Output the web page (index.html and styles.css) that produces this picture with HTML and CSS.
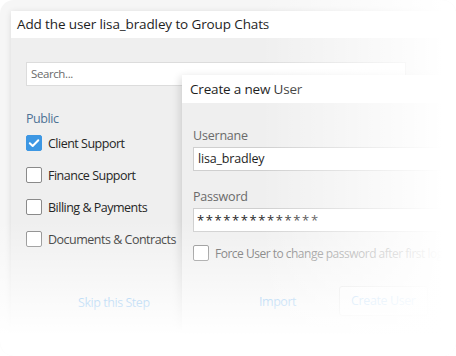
FILE: index.html
```html
<!DOCTYPE html>
<html>
<head>
<meta charset="utf-8">
<link rel="stylesheet" href="styles.css">
</head>
<body>
<div class="frame">
  <div class="dialog back">
    <div class="dlg-head">Add the user lisa_bradley to Group Chats</div>
    <div class="dlg-body back-body">
      <div class="search">Search...</div>
      <div class="group-label">Public</div>
      <div class="check-row"><span class="box checked"><svg viewBox="0 0 16 16" width="16" height="16"><path d="M3.8 8.2 L6.7 11 L12.3 5.2" fill="none" stroke="#fff" stroke-width="2" stroke-linecap="round" stroke-linejoin="round"/></svg></span><span class="check-text">Client Support</span></div>
      <div class="check-row"><span class="box"></span><span class="check-text">Finance Support</span></div>
      <div class="check-row"><span class="box"></span><span class="check-text">Billing &amp; Payments</span></div>
      <div class="check-row"><span class="box"></span><span class="check-text">Documents &amp; Contracts</span></div>
      <div class="back-actions"><span class="link">Skip this Step</span></div>
    </div>
  </div>

  <div class="dialog front">
    <div class="dlg-head front-head">Create a new User</div>
    <div class="dlg-body front-body">
      <div class="field-label">Usernane</div>
      <div class="input">lisa_bradley</div>
      <div class="field-label second">Password</div>
      <div class="input pwd">**************</div>
      <div class="check-row small"><span class="box"></span><span class="check-text muted">Force User to change password after first login</span></div>
      <div class="front-actions"><span class="link import">Import</span><span class="btn">Create User</span></div>
    </div>
  </div>

  <div class="fade"></div>
</div>
</body>
</html>
```

FILE: styles.css
```css
* { box-sizing: border-box; }
html, body { margin: 0; padding: 0; background: #fff; }
body { width: 456px; height: 356px; overflow: hidden; font-family: "Open Sans", "Noto Sans", sans-serif; }

.frame {
  position: relative;
  width: 456px;
  height: 356px;
  background: #f6f6f6;
  border-radius: 14px;
  overflow: hidden;
  padding: 11px 0 0 11px;
}

.dialog { box-shadow: 0 1px 6px rgba(0,0,0,0.12); }

.back { width: 445px; height: 334px; display: flex; flex-direction: column; }

.dlg-head {
  height: 27px;
  background: #fff;
  color: #1e1e1e;
  font-size: 13.5px;
  letter-spacing: -0.12px;
  line-height: 27px;
  padding-left: 6px;
  flex: none;
  white-space: nowrap;
}

.dlg-body { background: #efefef; flex: 1; display: flex; flex-direction: column; }

.back-body { padding: 24px 0 0 15px; }

.search {
  width: 380px;
  height: 24px;
  background: #fff;
  border: 1px solid #dcdcdc;
  color: #6a6a6a;
  font-size: 11.5px;
  letter-spacing: -0.4px;
  line-height: 22px;
  padding-left: 4px;
}

.group-label {
  margin-top: 25px;
  color: #4d7295;
  font-size: 12.5px;
  letter-spacing: -0.45px;
  line-height: 16px;
}

.check-row { height: 32px; display: flex; align-items: center; gap: 6px; white-space: nowrap; }

.box {
  width: 16px;
  height: 16px;
  flex: none;
  background: #fff;
  border: 1px solid #8a8a8a;
  border-radius: 2px;
  display: flex;
}
.box.checked { background: #3d97e3; border-color: #3d97e3; }
.box.checked svg { margin: -1px; }

.check-text { color: #262626; font-size: 12.5px; letter-spacing: -0.5px; }
.check-text.muted { color: #5a5a5a; font-size: 12px; letter-spacing: -0.5px; }

.back-actions { margin-top: 35px; padding-left: 52px; }
.link { color: #3d97e3; font-size: 12.5px; letter-spacing: -0.45px; }

.front {
  position: absolute;
  left: 182px;
  top: 75px;
  width: 274px;
  height: 256px;
  display: flex;
  flex-direction: column;
  box-shadow: -2px 2px 8px rgba(0,0,0,0.14);
}
.front-head { height: 28px; line-height: 28px; padding-left: 8px; letter-spacing: -0.18px; }
.front-body { padding: 24px 0 0 11px; }

.field-label { color: #6a6a6a; font-size: 12.5px; letter-spacing: -0.2px; line-height: 18px; }
.field-label.second { margin-top: 17px; }

.input {
  margin-top: 2px;
  width: 263px;
  height: 24px;
  background: #fff;
  border: 1px solid #cfcfcf;
  color: #1e1e1e;
  font-size: 12.5px;
  letter-spacing: -0.18px;
  line-height: 22px;
  padding-left: 4px;
}
.input.pwd { letter-spacing: 1.6px; font-size: 13px; padding-left: 3px; }

.check-row.small { margin-top: 5px; }

.front-actions { margin-top: 17px; display: flex; align-items: center; padding-left: 66px; gap: 43px; }
.btn {
  height: 30px;
  line-height: 28px;
  padding: 0 11px;
  border: 1px solid #c8c8c8;
  border-radius: 3px;
  background: #f7f7f7;
  color: #3d97e3;
  font-size: 12.5px;
  letter-spacing: -0.4px;
  white-space: nowrap;
}

.fade {
  position: absolute;
  inset: 0;
  pointer-events: none;
  background:
    linear-gradient(to right, rgba(255,255,255,0) 57%, #fff 97%),
    linear-gradient(to bottom, rgba(255,255,255,0) 62%, #fff 94%);
}
```
